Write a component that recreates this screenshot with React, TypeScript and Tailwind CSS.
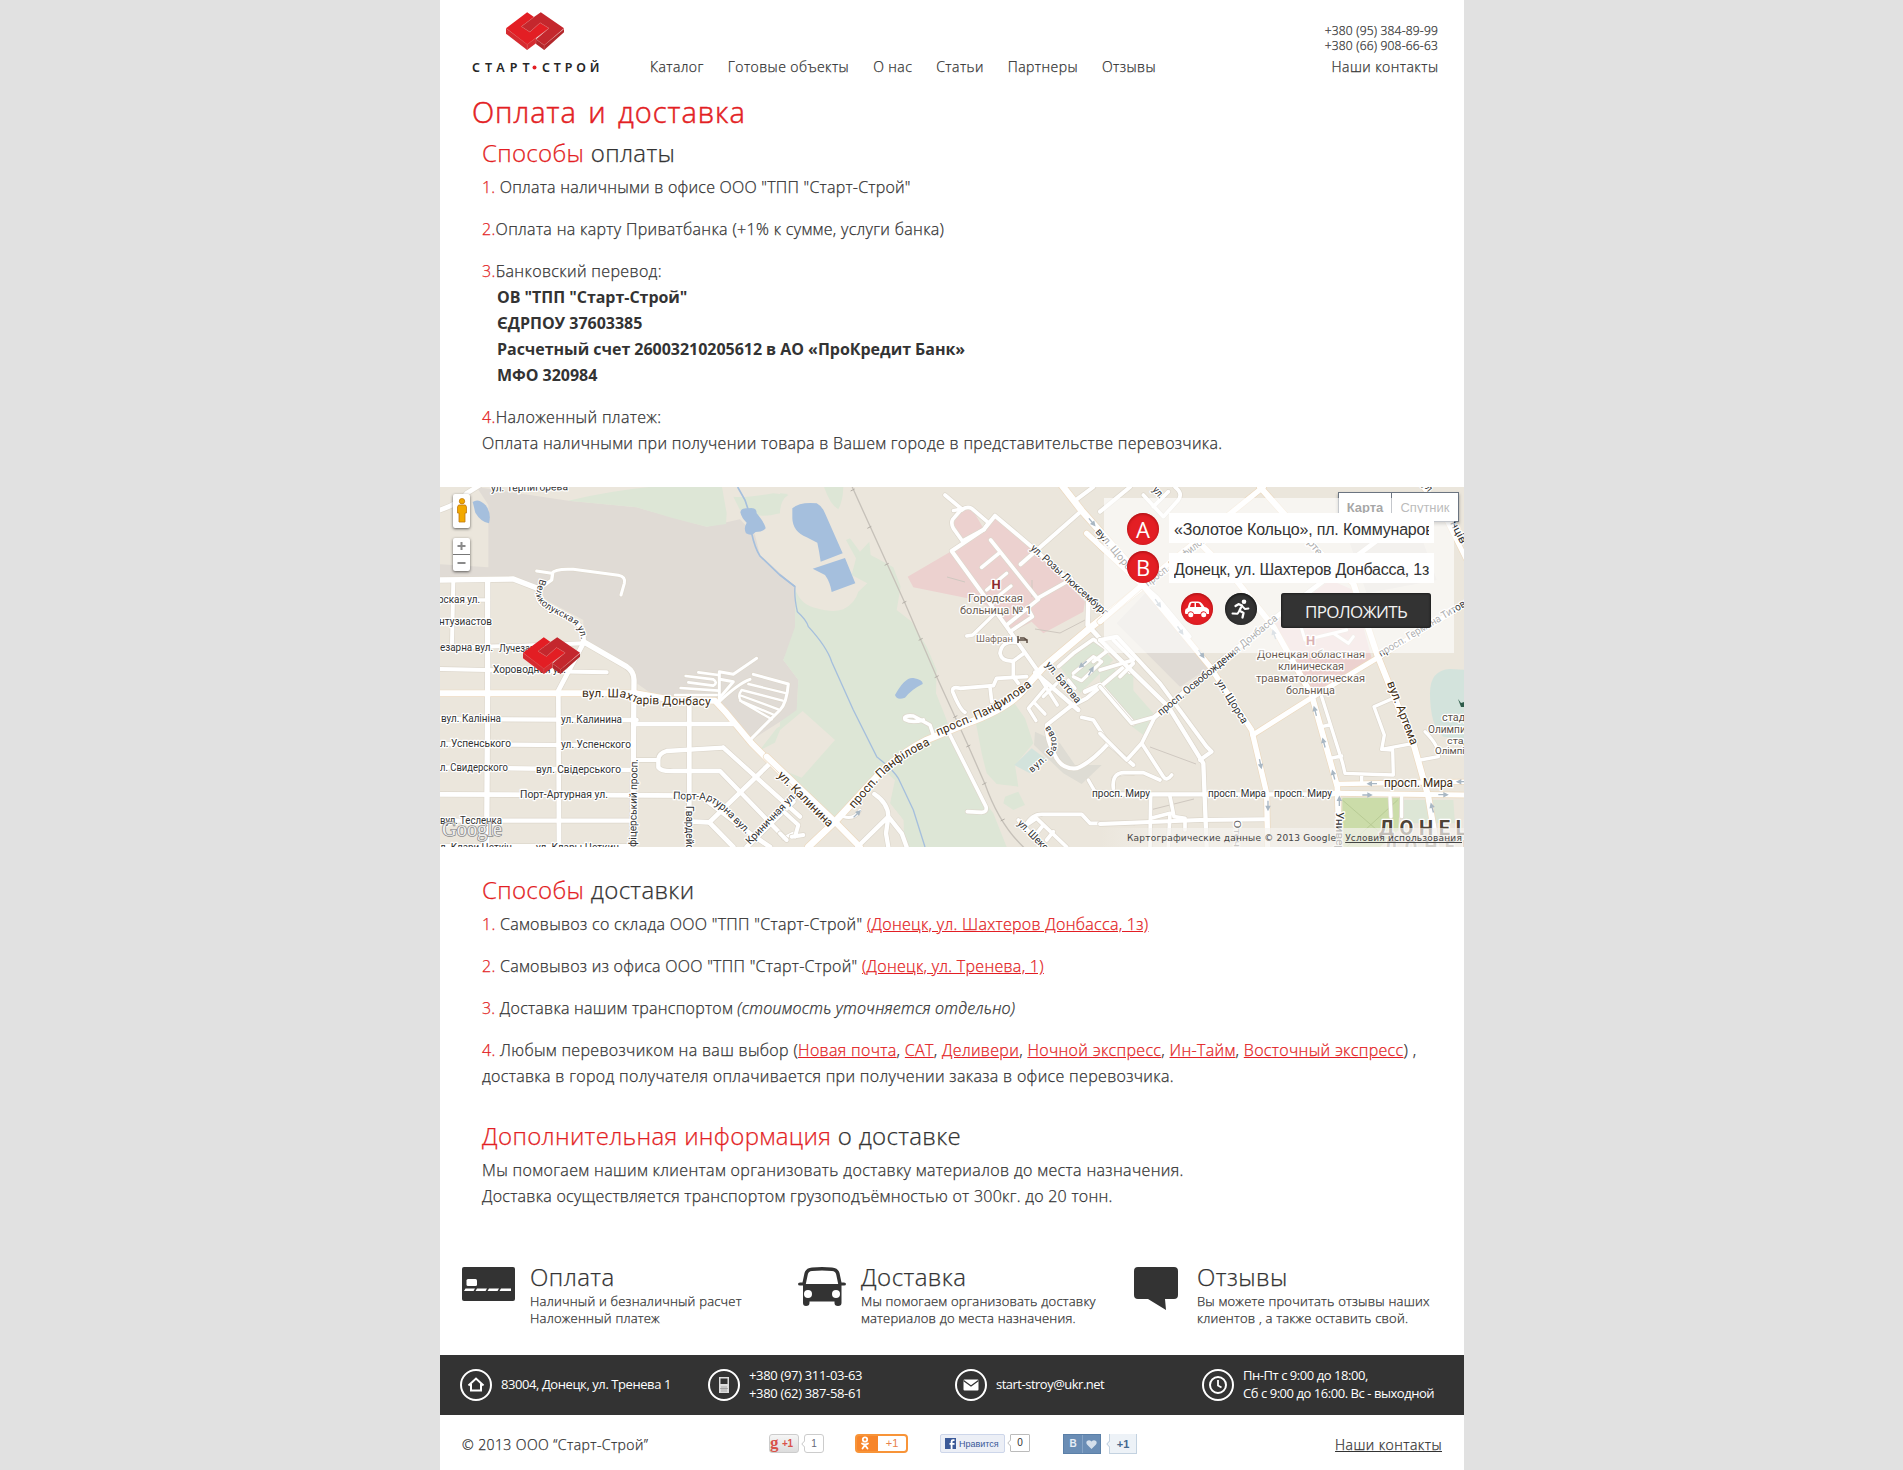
import React from "react";

const OS = "font-['Open_Sans',sans-serif]";
const THIN = "font-light [-webkit-text-stroke:0.25px]";

function LogoMark({ className }: { className: string }) {
  return (
    <svg viewBox="0 0 170 112" className={className} preserveAspectRatio="none">
      <path d="M0 48 L62 94 L62 112 L0 64Z" fill="#d62b30" />
      <path d="M62 94 L88 76 L88 92 L62 112Z" fill="#d62b30" />
      <path d="M88 80 L112 98 L170 50 L170 60 L112 112 L88 94Z" fill="#b3272b" />
      <path d="M0 48 L62 1 L82 15 L45 43 L70 59 L100 32 L126 48 L62 96Z" fill="#e31e24" />
      <path d="M82 15 L102 1 L170 48 L112 98 L88 80 L126 48 L100 32 L70 59 L45 43Z" fill="#c4272d" />
      <path d="M82 15 L45 43 L70 59 L100 32 L126 48 L62 96 L0 48" fill="none" stroke="#d9605f" strokeWidth="1.5" />
      <path d="M88 76 L88 94 M88 80 L112 98 L170 50 M112 98 V112 M62 96 V112" fill="none" stroke="#cf5a5a" strokeWidth="1.5" />
    </svg>
  );
}

/* ---------- map ---------- */

type Road = [string, number];

const roadsWest: Road[] = [
  ["M0 90 Q60 70 80 40 L120 15", 14],
  ["M0 300 L220 297 L300 328", 16],
  ["M300 325 Q285 350 305 372 Q345 400 395 418 Q435 440 430 485", 14],
  ["M430 485 L560 560 Q582 575 582 600 L578 1101", 16],
  ["M290 273 L335 280 Q345 265 400 268 L535 286 Q558 290 553 310 L543 345", 9],
  ["M338 280 L335 300 L300 325", 10],
  ["M143 300 L143 600 L140 1101", 16],
  ["M40 300 L36 490", 12],
  ["M0 360 L145 360", 11],
  ["M0 503 L250 497 L430 490", 12],
  ["M0 567 L250 572 L500 577", 12],
  ["M430 490 L355 632 L357 1101", 14],
  ["M0 717 L590 720", 13],
  ["M0 792 L580 797", 13],
  ["M0 862 L580 870", 13],
  ["M0 943 L780 947 L930 1060 L990 1101", 14],
  ["M0 1022 L580 1022", 13],
  ["M0 1098 L580 1098", 12],
  ["M580 732 L885 732", 13],
  ["M580 840 L650 840", 12],
  ["M850 803 L680 813 Q655 820 655 840 L655 862 Q665 875 700 873 L840 873 L1035 1075", 13],
  ["M850 803 L1080 1010", 13],
  ["M748 660 L748 1101", 14],
  ["M990 850 L808 1027 L760 1025", 14],
  ["M808 1027 L880 1101", 14],
  ["M1060 965 L920 1101", 14],
  ["M1030 1075 L1060 1060", 10],
  ["M705 645 L830 645 M722 624 L835 632 M737 588 L820 598 M745 607 L820 617 M775 577 L835 585 M820 598 Q835 608 820 617", 8],
  ["M950 535 L880 583 L838 575 L838 660 M840 598 L880 605 L838 655", 9],
  ["M930 598 Q895 610 832 670 M940 583 L1045 612 Q1040 670 1020 690 L935 775", 9],
  ["M925 612 L1040 640 M905 630 L1028 662 M898 645 L1015 688 M900 662 L1003 705 M905 630 Q890 650 905 665 L995 718", 7],
];

const mainWest: Road[] = [["M0 640 L590 640 L700 660 L825 662 L860 700 L935 790 L1060 915", 18]];

const roadsCenter: Road[] = [
  ["M940 21 L885 62", 12],
  ["M905 92 L722 253", 12],
  ["M495 45 L545 87 L518 118 Q512 130 520 145 L547 183 L612 148 L625 128 L575 85 Q560 78 545 90", 11],
  ["M520 92 L545 87", 10],
  ["M612 148 L515 213 L680 440 L775 575", 12],
  ["M612 148 L645 107 L755 200 L985 405", 12],
  ["M632 180 L772 355 M660 217 L605 262 M772 355 L875 297 M680 435 L775 358 M690 455 L757 410 L742 382", 11],
  ["M680 280 L620 330 M693 318 L640 360 M560 468 L578 465 L645 400", 10],
  ["M925 365 L923 435 L1050 575", 14],
  ["M710 487 Q665 480 660 520 Q665 545 700 543 L732 520 M700 543 L700 590 L715 610", 11],
  ["M555 697 Q540 690 518 635 Q515 618 540 625 L640 617 L650 595 L740 590 M630 620 L635 665", 11],
  ["M375 718 Q370 705 400 708 L450 735 L460 765 M375 718 Q395 730 430 720", 11],
  ["M510 765 L618 980 Q622 997 605 997 L562 995", 11],
  ["M283 942 Q325 970 325 1010 L318 1060 L325 1101 M325 1010 L365 1060 L380 1101 M325 1010 L232 1101", 13],
  ["M190 1010 Q225 1020 240 990", 9],
  ["M0 985 L55 1035 L45 1070 M0 1060 L20 1080 M35 1070 L70 1065", 12],
  ["M778 590 L832 675 M800 620 L745 685 L768 722 M765 670 L795 702 M790 650 L830 610", 10],
  ["M835 560 L880 520 L940 478 L985 510 L940 545", 11],
  ["M880 580 L940 530 L965 545 L905 602 L880 590 M865 600 L885 625", 10],
  ["M765 578 L895 690", 13],
  ["M915 635 L960 615 L1060 730", 14],
  ["M1050 545 L920 655 L870 680 L800 735 Q800 780 820 815 Q840 870 890 865 Q930 850 985 790 L1060 855", 12],
  ["M985 790 L940 720 L905 712", 11],
  ["M925 900 L945 935 L1050 943 M1000 930 L1000 895 Q1010 878 1060 880", 10],
  ["M735 1040 Q755 1000 790 1003 L905 1003 L930 1030 L1060 1030", 11],
  ["M715 1020 L790 1101 M740 1035 L770 1015 L860 1101 M770 1060 L790 1035 M800 1080 L820 1055", 11],
];

const mainCenter: Road[] = [
  ["M-40 830 L170 1030 L240 1101", 18],
  ["M845 15 L905 92 L1080 290", 20],
  ["M85 1101 L165 1025 L290 890 Q360 820 440 780 L560 730 Q700 680 745 612 L790 562 L935 440 L1080 325", 20],
];

const roadsEast: Road[] = [
  ["M130 45 L190 110 L235 60 Q250 40 225 21 M160 80 L205 35", 11],
  ["M0 95 L90 21", 12],
  ["M0 480 L50 470 L180 610 L320 800 L335 815 L300 840", 12],
  ["M0 480 L205 680 L310 850 L320 1101", 13],
  ["M0 620 L95 730 L165 710 L205 680 M0 570 L100 540 L40 480 M60 590 L100 550", 11],
  ["M165 710 L125 790 L80 840 L0 760 M125 790 L190 890 Q200 905 215 885", 11],
  ["M40 925 Q35 880 70 878 L130 878 L180 900", 11],
  ["M0 943 L500 943 L700 943", 13],
  ["M0 1032 L300 1020 L500 1018", 12],
  ["M152 945 L150 1101 M210 950 L222 1010 L255 1015 L255 1050 M152 1015 L210 1000 L205 1101 M410 1020 L412 1101", 11],
  ["M270 470 L170 350 L0 200", 10],
  ["M165 710 L360 545 L530 410 L700 280 L860 160", 14],
  ["M665 650 L728 850 L735 880 L880 885 L878 810 L845 808 L853 765 L822 680 L880 655 M725 828 L690 835 M688 735 L665 740 M845 808 L940 790 M785 885 L785 905", 10],
  ["M600 430 L615 480 L740 450 M700 460 L745 490 L760 470", 9],
  ["M960 840 L1015 830 Q1020 800 975 755", 10],
  ["M870 950 L873 1010 M905 950 L905 1010", 10],
];

const mainEast: Road[] = [
  ["M0 425 L130 312 L330 150 L490 21", 16],
  ["M-40 160 L130 318 L330 560 L455 750 L500 940 L503 1101", 16],
  ["M458 765 L640 650 L830 535 L1100 370", 15],
  ["M300 190 L400 290 L520 440 L635 645 L712 920 L718 1101", 17],
  ["M480 21 L640 200 L760 310 L830 520 L870 620 L940 790 L985 950 L1010 1101", 18],
  ["M715 912 L1100 905", 14],
  ["M700 940 L1100 945", 15],
  ["M970 21 L1040 120 L1100 240", 14],
];

function Roads({ roads, main, x }: { roads: Road[]; main: Road[]; x: number }) {
  return (
    <g transform={`translate(${x} -7) scale(.33333)`} fill="none" strokeLinecap="round" strokeLinejoin="round">
      {roads.map(([d, w], i) => (
        <path key={i} d={d} stroke="#ddd7cc" strokeWidth={w + 4} />
      ))}
      {main.map(([d, w], i) => (
        <path key={i} d={d} stroke="#ecd9bf" strokeWidth={w + 4} />
      ))}
      {roads.map(([d, w], i) => (
        <path key={i} d={d} stroke="#fff" strokeWidth={w} />
      ))}
      {main.map(([d, w], i) => (
        <path key={i} d={d} stroke="#fff" strokeWidth={w} />
      ))}
    </g>
  );
}

/* text, x, y, size, rotation, length, fill */
type Label = [string, number, number, number, number, number, string?];

const labels: Label[] = [
  ["ул. Терпигорева", 51, 4.5, 10.5, -1, 77],
  ["рская ул.", -2, 116, 10.5, 0, 42],
  ["нтузиастов", -1, 137.5, 10.5, 0, 53],
  ["езарна вул.", 0, 163.5, 10.5, 0, 53],
  ["Лучезарная", 59, 164.5, 10.5, 0, 52],
  ["Хороводная ул.", 53, 186, 10.5, 0, 73],
  ["вул. Калініна", 1, 235, 10.5, 0, 60],
  ["ул. Калинина", 121, 235.5, 10.5, 0, 61],
  ["л. Успенського", 0, 260, 10.5, 0, 71],
  ["ул. Успенского", 121, 261, 10.5, 0, 70],
  ["л. Свидерского", 0, 284, 10.5, 0, 68],
  ["вул. Свідерського", 96, 285.5, 10.5, 0, 85],
  ["Порт-Артурная ул.", 80, 311, 10.5, 0, 88],
  ["вул. Тесленка", 0, 337, 10.5, 0, 62],
  ["л. Клари Цеткін", 0, 364, 10.5, 0, 72],
  ["ул. Клары Цеткин", 96, 364, 10.5, 0, 83],
  ["фіцерський просп.", 196, 360, 10.5, -89, 88],
  ["Гвардейская", 246, 319, 10.5, 90, 60],
  ["Криничная ул.", 310, 358, 10.5, -46, 68],
  ["ул. Калинина", 337, 289, 12, 45, 73, "#3d2c12"],
  ["ул. Розы Люксембург", 590, 62, 10.5, 42, 100],
  ["вул. Щорса", 655, 45, 10.5, 50, 56],
  ["ул. Батова", 605, 178, 10.5, 51, 50],
  ["Шафран", 536, 155, 9.5, 0, 37, "#7b6d62"],
  ["Городская", 528, 114.5, 10.5, 0, 55, "#6b5d52"],
  ["больница № 1", 520, 126.5, 10.5, 0, 72, "#6b5d52"],
  ["просп. Миру", 652, 309.5, 10.5, 0, 58],
  ["ул. Шекспира", 577, 337, 10.5, 45, 60],
  ["просп. Миру", 834, 309.5, 10.5, 0, 58],
  ["просп. Мира", 768, 309.5, 10.5, 0, 58],
  ["просп. Мира", 944, 299.5, 12, 0, 69, "#3d2c12"],
  ["просп. Освобождения Донбасса", 721, 229, 10.5, -39.5, 152],
  ["просп. Панфилова", 708, 100, 10.5, -38, 80],
  ["ул. Щорса", 776, 195, 10.5, 58, 50],
  ["просп. Германа Титова", 941, 170, 10.5, -31, 105],
  ["вул. Артема", 947, 196, 12, 69, 67, "#3d2c12"],
  ["Артема", 862, 50, 10.5, 50, 40],
  ["ул.", 712, 3, 10.5, 50, 12],
  ["ул.", 982, -2, 10.5, 50, 12],
  ["нців", 1010, 36, 10.5, 63, 24],
  ["Универ", 896, 325, 10.5, 90, 40],
  ["Отечес", 794, 333, 9.5, 90, 40, "#6b6b6b"],
  ["Донецкая областная", 817, 170.5, 10.5, 0, 108, "#6b5d52"],
  ["клиническая", 838, 182.5, 10.5, 0, 66, "#6b5d52"],
  ["травматологическая", 816, 194.5, 10.5, 0, 109, "#6b5d52"],
  ["больница", 846, 206.5, 10.5, 0, 49, "#6b5d52"],
  ["стадион", 1002, 234, 10.5, 0, 42, "#5b5148"],
  ["Олимпийский", 988, 246, 10.5, 0, 66, "#5b5148"],
  ["стадіон", 1007, 256.5, 9.5, 0, 38, "#5b5148"],
  ["Олімпійський", 995, 266.5, 9.5, 0, 62, "#5b5148"],
];

/* text, path id, size, length, fill */
const curved: [string, string, number, number, string][] = [
  ["Великолукская ул.", "st-velyko", 9.5, 83, "#333"],
  ["вул. Шахтарів Донбасу", "st-shakht", 12, 130, "#3d2c12"],
  ["Порт-Артурна вул.", "st-port", 10.5, 86, "#333"],
  ["просп. Панфілова", "st-panf1", 12, 101, "#3d2c12"],
  ["просп. Панфилова", "st-panf2", 12, 107, "#3d2c12"],
  ["вул. Батова", "st-bat", 9.5, 60, "#333"],
];

const railTicks = [
  [218, 30], [268, 142], [320, 253], [373, 367], [422, 478], [470, 590], [526, 710], [565, 798], [613, 911], [668, 1020],
];

const arrows: [number, number, number][] = [
  [935, 125, 50], [1133, 368, 55], [1200, 450, 55], [1263, 520, 55], [1483, 465, -108],
  [1606, 695, -105], [1632, 790, -105], [1661, 886, -105], [1441, 850, 78], [1464, 975, 90],
  [1778, 911, 180], [1760, 945, 0], [1988, 944, 0], [2046, 905, 180], [1678, 965, -90], [1957, 985, -105],
  [910, 552, 140], [932, 575, -60], [230, 1003, -45],
];

function CityMap() {
  return (
    <svg viewBox="0 0 1024 360" className="block h-[360px] w-[1024px]">
      <defs>
        <path id="st-velyko" d="M100 92 L96 106 Q96 115 107 122 L131 135 Q142 142 141.500 160" />
        <path id="st-shakht" d="M142 210 L182 210.500 Q190 212.500 197 217 L275 218.500" />
        <path id="st-port" d="M233 312 L266 313 Q280 320 290 331 L310 351" />
        <path id="st-panf1" d="M414 322 L441 291 Q460 272 490 258" />
        <path id="st-panf2" d="M498 249 L538 232 Q562 222 593 198" />
        <path id="st-bat" d="M592 286 L610 270 Q625 258 607 236" />
        <linearGradient id="credit-fade" x1="0" x2="1">
          <stop offset="0" stopColor="#f5f3ef" stopOpacity="0" />
          <stop offset=".2" stopColor="#f5f3ef" stopOpacity=".7" />
          <stop offset="1" stopColor="#f5f3ef" stopOpacity=".7" />
        </linearGradient>
      </defs>
      <rect width="1024" height="360" fill="#ebe6dc" />
      <g transform="translate(0 -7) scale(.33333)">
        <path d="M110 21 L385 62 L590 82 L800 140 L900 118 L945 165 L960 225 L1065 320 L1075 440 L1030 540 L1075 600 L1070 700 L1020 725 L935 780 L880 730 L830 665 L640 645 L590 610 L575 575 L430 485 L430 420 L300 350 L290 325 L225 295 L0 300 L0 253 L145 262 L145 75Z" fill="#e0dbd5" />
        <path d="M385 62 Q540 25 700 15 L845 15 L860 100 L858 132 L800 140 L700 115 L590 82Z M880 50 Q910 55 1000 40 L1045 45 Q1020 60 1020 100 Q960 115 940 100 L900 90Z" fill="#dde6d6" />
        <path d="M958 812 L1010 745 L1060 715 L1060 760Z M1030 540 L1060 500 L1060 570Z" fill="#dde6d6" />
        <path d="M98 66 Q115 53 137 76 Q155 100 147 130 Q122 125 106 98Z" fill="#a5bfdd" />
        <path d="M893 21 L915 60 L925 90 M935 160 Q945 205 960 228 L1020 285 L1065 320" fill="none" stroke="#a5bfdd" strokeWidth="5" />
        <path d="M901 97 Q903 82 925 85 Q950 80 950 100 Q975 130 977 145 Q970 155 947 156 Q935 170 918 160 Q910 145 920 128 Q905 115 901 97Z" fill="#a5bfdd" />
      </g>
      <g transform="translate(340 -7) scale(.33333)">
        <path d="M45 325 Q60 375 110 385 Q160 400 190 388 Q225 370 235 335 L262 310 L215 285 L228 235 L198 180 L210 175 L240 215 L268 185 L272 225 L300 240 L340 262 L362 320 L350 390 L395 425 L440 500 L470 570 L468 640 L500 720 L520 790 L580 920 L640 1000 L680 1101 L372 1101 L370 1020 L330 970 L345 900 L310 870 L165 1020 L-30 840 L0 760 L0 725 L50 690 L55 600 L10 540 L45 440Z" fill="#dde6d6" />
        <path d="M68 693 L165 780 L65 893 L-40 850 L0 750Z" fill="#ebe6dc" />
        <path d="M340 900 L290 880 L165 1020 L230 1101 L372 1101 L370 1020 L330 970Z" fill="#ebe6dc" />
        <path d="M585 715 L700 665 L735 715 L760 790 L705 855 L715 920 L650 912 L620 880 L605 820Z M675 950 L715 935 L735 975 L700 990 L670 970Z M840 560 L940 480 L1000 540 L900 640Z M955 620 L1060 560 L1060 740Z M130 15 L190 15 Q190 60 175 88 Q150 75 130 15Z M0 40 L25 42 L0 55Z" fill="#dde6d6" />
        <path d="M765 755 L840 790 L885 855 L965 855 L905 912 L850 880 L762 795Z" fill="#dedcd4" />
        <path d="M703 855 L755 805 L802 840 L750 880Z" fill="#d3e3dc" />
        <path d="M383 290 L515 213 L547 183 L520 130 L545 88 L575 85 L612 148 L645 107 L755 200 L915 365 L910 395 L790 460 L755 425 L690 460 L650 400 L600 362 L400 322Z" fill="#ecd1cf" />
        <path d="M37 85 Q60 65 110 70 Q128 80 135 100 L188 220 L122 245 Q118 215 112 188 L80 172 Q38 155 37 115Z M98 266 L195 234 L226 310 L155 336 Q150 305 135 285Z M345 645 Q375 590 400 594 Q430 600 428 612 Q395 628 375 653 Q350 662 345 645Z" fill="#a5bfdd" />
        <path d="M0 285 L45 320 Q42 350 52 395 Q80 420 85 440 Q140 500 155 545 L220 690 L290 830 Q340 870 355 895 L400 990 L435 1101" fill="none" stroke="#a5bfdd" strokeWidth="4" />
        <path d="M214 15 L375 370 L470 590 L565 798 L615 912 Q660 1040 740 1110" fill="none" stroke="#c6c1b9" strokeWidth="4" />
        {railTicks.map(([x, y]) => (
          <path key={x} d={`M${x - 6} ${y + 3} l12 -6`} stroke="#b3aea6" strokeWidth="3" />
        ))}
      </g>
      <g transform="translate(660 -7) scale(.33333)">
        <path d="M0 520 L20 540 L160 700 L130 765 L90 735 L0 630Z" fill="#dde6d6" />
        <path d="M145 330 L330 560 L240 620 L50 430Z" fill="#e0dbd5" />
        <path d="M750 190 L960 160 L1010 300 L800 340Z" fill="#e0dbd5" />
        <path d="M520 430 L690 300 L760 330 L815 535 L640 650 L600 610Z" fill="#ecd1cf" />
        <path d="M990 640 Q990 570 1050 567 L1100 570 L1100 780 L1030 770 Q990 740 990 640Z" fill="#d3e3dc" />
        <path d="M727 953 L900 953 L895 1050 L840 1101 L727 1101Z" fill="#cbdca9" />
        <path d="M727 960 L890 1101 M893 960 L740 1101" stroke="#b8cb95" strokeWidth="3" />
        <path d="M910 960 L1060 960 L1065 1030 L910 1030Z" fill="#dde6d6" />
      </g>
      <path d="M507 90 l18 5 M592 110 v-17 M595 142 l25 4 l27 -14 M710 260 l46 17 M710 323 l44 -11" fill="none" stroke="#cfc8c0" strokeWidth="1" />
      <Roads roads={roadsWest} main={mainWest} x={0} />
      <Roads roads={roadsCenter} main={mainCenter} x={340} />
      <Roads roads={roadsEast} main={mainEast} x={660} />
      <g transform="translate(340 -7) scale(.33333)" stroke="#a9b7c3" strokeWidth="4" fill="#a9b7c3">
        {arrows.map(([x, y, r], i) => (
          <path key={i} d="M-13 0 H8 M4 -5 L14 0 L4 5Z" transform={`translate(${x} ${y}) rotate(${r})`} />
        ))}
      </g>
      <g className="font-[Roboto,sans-serif]" stroke="#fff" strokeWidth="2.500" strokeLinejoin="round" paintOrder="stroke" fill="#333">
        {labels.map(([t, x, y, s, r, len, fill], i) => (
          <text key={i} fontSize={s} textLength={len} lengthAdjust="spacingAndGlyphs" fill={fill ?? "#333"} transform={`translate(${x} ${y}) rotate(${r})`}>
            {t}
          </text>
        ))}
        {curved.map(([t, id, s, len, fill]) => (
          <text key={id} fontSize={s} fill={fill} textLength={len}>
            <textPath href={`#${id}`} textLength={len}>{t}</textPath>
          </text>
        ))}
        <text x="551.500" y="102" fontSize="13" fontWeight="700" fill="#8c2a2e">H</text>
        <text x="866" y="158" fontSize="13" fontWeight="700" fill="#a03a3e">H</text>
        <text x="939" y="348" fontSize="20" fontWeight="700" fill="#4d4337" textLength="92" >ДОНЕЦ</text>
        <text x="944" y="366" fontSize="18" fontWeight="700" fill="#8a8278" textLength="92">ДОНЕЦ</text>
      </g>
      <path d="M578 149 v7 M578 153 h9 v3 M580 151 h4 l3 2" stroke="#5b4c42" strokeWidth="1.500" fill="none" />
      <path d="M1018 212 l3 4 l3 -1 v5 h-3 z" fill="#2f5b4a" />
      <rect x="660" y="341" width="364" height="19" fill="url(#credit-fade)" />
      <text x="2" y="348.500" fontSize="20" textLength="60" lengthAdjust="spacingAndGlyphs" fill="#fff" fillOpacity=".85" stroke="#8c8c8c" strokeWidth="1.500" paintOrder="stroke" className="font-['Liberation_Serif',serif]">Google</text>
    </svg>
  );
}

function Pin({ children }: { children: React.ReactNode }) {
  return (
    <div className={`flex size-8 items-center justify-center rounded-full bg-[#e31e24] text-[22px] leading-none text-white shadow-[inset_0_1px_3px_rgba(120,0,0,.6)] ${OS}`}>
      {children}
    </div>
  );
}

function RoutePanel() {
  return (
    <div className="absolute left-[664px] top-[11px] h-[155px] w-[350px] bg-white/60 pl-[23px] pt-[15px]">
      <div className="flex gap-[10px]">
        <div className="flex flex-col gap-[6px]">
          <Pin>A</Pin>
          <Pin>B</Pin>
        </div>
        <div className="flex flex-col gap-[10px] font-['Liberation_Sans',Arial,sans-serif] text-[16px] text-[#333]">
          <div className="h-[30px] w-[265px] bg-white px-[5px] leading-[33px]">
            <div className="w-[255px] overflow-hidden whitespace-nowrap tracking-[-0.17px]">«Золотое Кольцо», пл. Коммунаров</div>
          </div>
          <div className="h-[30px] w-[265px] bg-white px-[5px] leading-[33px]">
            <div className="w-[255px] overflow-hidden whitespace-nowrap tracking-[-0.25px]">Донецк, ул. Шахтеров Донбасса, 1з</div>
          </div>
        </div>
      </div>
      <div className="mt-[10px] flex pl-[54px]">
        <div className="flex size-8 items-center justify-center rounded-full bg-[#e31e24] shadow-[inset_0_1px_3px_rgba(120,0,0,.6)]">
          <svg viewBox="0 0 24 17" className="h-[17px] w-6" fill="#fff">
            <path fillRule="evenodd" d="M0 10 Q0 7.500 2.500 7 L4 2.500 Q4.500 0.500 7 0.500 H13 Q15.500 .5 17 2.500 L19.500 6 Q24 7 24 9.500 V13 H21.800 A3.200 3.200 0 0 0 15.500 13 H9 A3.200 3.200 0 0 0 2.700 13 H1 Q0 13 0 12Z M6 2.500 L5 6 H9.500 V2 H7Z M11 2 V6 H16.500 L14.500 2.800 Q14 2 13 2Z" />
            <circle cx="5.800" cy="13.800" r="2.500" />
            <circle cx="18.700" cy="13.800" r="2.500" />
          </svg>
        </div>
        <div className="ml-3 flex size-8 items-center justify-center rounded-full bg-[#333] shadow-[inset_0_1px_3px_rgba(0,0,0,.8)]">
          <svg viewBox="0 0 20 20" className="size-5" fill="none" stroke="#fff" strokeLinecap="round" strokeLinejoin="round">
            <circle cx="13" cy="2.700" r="2.300" fill="#fff" stroke="none" />
            <path d="M4.500 7 L7.500 5.200 L11 6.500 L8.500 11.500 L12.500 14 L11.500 18.500" strokeWidth="2.300" />
            <path d="M11 7 L14 10 L17.500 9.500" strokeWidth="1.800" />
            <path d="M8 12.500 L6.500 14.800 L1.500 14.500" strokeWidth="2" />
          </svg>
        </div>
        <div className={`ml-6 h-[35px] w-[150px] rounded-[3px] bg-[#333] text-center text-[17px] leading-[37px] tracking-[-0.7px] text-[#f2f2f2] shadow-[inset_0_0_3px_rgba(0,0,0,.8)] ${OS}`}>
          ПРОЛОЖИТЬ
        </div>
      </div>
    </div>
  );
}

function MapSection() {
  return (
    <div className="relative mt-[31px] h-[360px] overflow-hidden">
      <CityMap />
      <LogoMark className="absolute left-[83px] top-[150px] h-[37px] w-[57px]" />
      <div className="absolute left-[13px] top-[7px] flex h-[34px] w-[17px] justify-center rounded-[2px] bg-white pt-[4px] shadow-[0_1px_3px_rgba(0,0,0,.6)]">
        <svg viewBox="0 0 10 25" className="h-[25px] w-[10px]" fill="#f2a900" stroke="#c07a10" strokeWidth=".8">
          <circle cx="5" cy="3.200" r="2.700" />
          <path d="M1.500 7 H8.500 L9.500 9 V15 H8 V24 H2 V15 H.5 V9Z" />
        </svg>
      </div>
      <div className="absolute left-[13px] top-[51px] h-[33px] w-[17px] rounded-[2px] bg-white shadow-[0_1px_3px_rgba(0,0,0,.6)]">
        <svg viewBox="0 0 17 33" className="h-[33px] w-[17px]" stroke="#8a8a8a" strokeWidth="2">
          <path d="M4.500 8 H12.500 M8.500 4 V12 M4.500 25 H12.500" />
          <path d="M0 16.500 H17" stroke="#777" strokeWidth="1" />
        </svg>
      </div>
      <div className="absolute left-[898px] top-[5px] flex h-[30px] w-[121px] border border-[#6b7480] bg-white font-['Liberation_Sans',Arial,sans-serif] text-[13px] leading-[30px] shadow-[0_2px_3px_rgba(0,0,0,.35)]">
        <div className="w-[53px] border-r border-[#6b7480] text-center font-bold text-[#222]">Карта</div>
        <div className="grow text-center text-[#555]">Спутник</div>
      </div>
      <RoutePanel />
      <div className="absolute bottom-[2px] right-[2px] flex gap-[9px] whitespace-nowrap font-['DejaVu_Sans',sans-serif] text-[9px] leading-[14px] text-[#444]">
        <span className="tracking-[0.2px]">Картографические данные © 2013 Google</span>
        <span className="tracking-[0.2px] underline">Условия использования</span>
      </div>
    </div>
  );
}

/* ---------- text ---------- */

function Num({ children }: { children: React.ReactNode }) {
  return <span className="text-[#e31e24]">{children}</span>;
}

function Link({ children }: { children: React.ReactNode }) {
  return <a className="text-[#e31e24] underline">{children}</a>;
}

function Heading({ red, dark, className = "" }: { red: string; dark: string; className?: string }) {
  return (
    <h2 className={`pl-[42px] text-[24px] leading-[32px] tracking-[0.32px] ${THIN} ${className}`}>
      <span className="text-[#e31e24]">{red}</span> {dark}
    </h2>
  );
}

function Feature({ icon, title, lines, width, gap }: { icon: React.ReactNode; title: string; lines: string[]; width: string; gap: string }) {
  return (
    <div className={`flex ${width}`}>
      <div className={gap}>{icon}</div>
      <div className={`-mt-[6px] whitespace-nowrap ${THIN}`}>
        <div className="text-[24px] leading-[32px] tracking-[0.45px]">{title}</div>
        <div className="text-[13px] leading-[17px] tracking-[0.2px]">
          {lines.map((l) => (
            <div key={l}>{l}</div>
          ))}
        </div>
      </div>
    </div>
  );
}

function Contact({ icon, lines, width, tracking }: { icon: React.ReactNode; lines: string[]; width: string; tracking: string }) {
  return (
    <div className={`flex items-center ${width}`}>
      <svg viewBox="0 0 32 32" className="size-8 shrink-0" fill="none" stroke="#fff">
        <circle cx="16" cy="16" r="15" strokeWidth="2" />
        {icon}
      </svg>
      <div className={`-mt-[2px] ml-[9px] whitespace-nowrap text-[13px] leading-[18px] text-white ${tracking}`}>
        {lines.map((l) => (
          <div key={l}>{l}</div>
        ))}
      </div>
    </div>
  );
}

function Notch({ color, fill }: { color: string; fill: string }) {
  return (
    <svg viewBox="0 0 4 8" className="-mr-px h-2 w-1 self-center relative" fill={fill} stroke={color} strokeWidth="1">
      <path d="M4 .5 L.8 4 L4 7.500" />
    </svg>
  );
}

function Social() {
  return (
    <div className="flex h-5 items-start font-['Liberation_Sans',Arial,sans-serif] text-[9px]">
      <div className="flex h-[19px]">
        <div className="flex h-[19px] w-[30px] items-center rounded-[3px] border border-[#ccc] bg-gradient-to-b from-[#f6f6f6] to-[#dcdcdc] pr-[3px] font-bold text-[#d9534a]">
          <span className="-mt-[3px] w-[12px] font-['Liberation_Serif',serif] text-[17px] leading-none">g</span>
          <span className="grow text-[10px] tracking-[-0.3px]">+1</span>
        </div>
        <div className="ml-[2px] flex">
          <Notch color="#c8c8c8" fill="#fff" />
          <div className="flex h-[19px] w-5 items-center justify-center rounded-[3px] border border-[#ccc] text-[10px] text-[#667]">1</div>
        </div>
      </div>
      <div className="ml-[31px] flex h-[19px] w-[53px] rounded-[4px] border-2 border-[#f89438] bg-[#f7852a]">
        <svg viewBox="0 0 20 15" className="h-[15px] w-[21px]" fill="none" stroke="#fff" strokeWidth="1.800" strokeLinecap="round">
          <circle cx="7.500" cy="3.500" r="2.200" />
          <path d="M4.500 7.500 Q7.500 9.500 10.500 7.500 M7.500 9 L5 12.500 M7.500 9 L10 12.500" />
        </svg>
        <div className="grow rounded-r-[2px] bg-white text-center text-[11px] leading-[15px] text-[#e8804a]">+1</div>
      </div>
      <div className="ml-[32px] flex h-[19px] w-[65px] items-center rounded-[2px] border border-[#cdd6ea] bg-[#eceff6] pl-[4px]">
        <svg viewBox="0 0 11 11" className="size-[11px] shrink-0">
          <rect width="11" height="11" fill="#3b5998" />
          <path d="M7.500 11 V6.800 H9.500 V5 H7.500 V3.800 Q7.500 3 8.500 3 H9.500 V1.300 H8 Q5.700 1.300 5.700 3.600 V5 H4.500 V6.800 H5.700 V11Z" fill="#fff" />
        </svg>
        <span className="ml-[3px] text-[9px] text-[#3b5998]">Нравится</span>
      </div>
      <div className="ml-[2px] flex h-[18px]">
        <Notch color="#bbb" fill="#fff" />
        <div className="flex h-[18px] w-5 items-center justify-center rounded-[1px] border border-[#bbb] text-[10px] text-[#333]">0</div>
      </div>
      <div className="ml-[33px] flex h-5 w-[38px] items-center border border-[#5b80a8] bg-[#6a8db5] font-bold text-[#e6edf5]">
        <span className="w-[18px] text-center text-[10px]">B</span>
        <span className="h-full w-px bg-[#86a4c6]" />
        <svg viewBox="0 0 12 10" className="ml-[3px] h-[9px] w-[11px]" fill="#d5e0ec">
          <path d="M6 10 L1 5 Q-.5 3 1 1.200 Q3.500 -1 6 1.800 Q8.500 -1 11 1.200 Q12.500 3 11 5Z" />
        </svg>
      </div>
      <div className="ml-[5px] flex h-5">
        <Notch color="#b9cbdc" fill="#edf2f7" />
        <div className="flex h-5 w-[28px] items-center justify-center border border-t-0 border-[#c3d2e0] bg-[#edf2f7] text-[11px] font-bold text-[#45688e]">+1</div>
      </div>
    </div>
  );
}

const nav = ["Каталог", "Готовые объекты", "О нас", "Статьи", "Партнеры", "Отзывы"];

const BODY = `pl-[42px] text-[16px] leading-[26px] tracking-[0.3px] whitespace-nowrap ${THIN}`;

export default function App() {
  return (
    <div className="min-h-[1470px] bg-[#e1e1e1] pl-[440px]">
      <div className={`h-[1470px] w-[1024px] overflow-hidden bg-white text-[#333] ${OS}`}>
        <header className="flex h-[91px] pl-[30px] pr-[26px]">
          <div className="w-[180px] pt-[12px]">
            <LogoMark className="ml-[36px] h-[38px] w-[58px]" />
            <svg viewBox="0 0 134 16" className="mt-[9px] block h-4 w-[134px] font-['Noto_Sans',sans-serif]" fontSize="12.500" fontWeight="600" fill="#262626">
              <text x="2" y="13" textLength="57.500">СТАРТ</text>
              <circle cx="64.500" cy="8.500" r="2" fill="#e31e24" />
              <text x="72" y="13" textLength="57.500">СТРОЙ</text>
            </svg>
          </div>
          <nav className={`mt-[57px] flex gap-6 text-[14px] leading-[20px] tracking-[0.43px] whitespace-nowrap ${THIN}`}>
            {nav.map((n) => (
              <a key={n}>{n}</a>
            ))}
          </nav>
          <div className={`ml-auto pt-[23px] text-right ${THIN}`}>
            <div className="text-[12px] leading-[15px] tracking-[0.2px]">
              <div>+380 (95) 384-89-99</div>
              <div>+380 (66) 908-66-63</div>
            </div>
            <div className="-mr-[0.5px] mt-[4px] text-[14px] leading-[20px] tracking-[0.45px]">Наши контакты</div>
          </div>
        </header>

        <h1 className="-mb-[2px] pl-[32px] text-[29px] font-light leading-[42px] tracking-[0.95px] text-[#e31e24] [-webkit-text-stroke:0.5px] [word-spacing:3px]">Оплата и доставка</h1>
        <Heading red="Способы" dark="оплаты" className="mt-[6px]" />
        <div className={`mt-[5px] flex flex-col gap-4 ${BODY}`}>
          <p className="tracking-[0.23px]"><Num>1.</Num> Оплата наличными в офисе ООО "ТПП "Старт-Строй"</p>
          <p className="tracking-[0.32px]"><Num>2.</Num>Оплата на карту Приватбанка (+1% к сумме, услуги банка)</p>
          <div>
            <p className="tracking-[0.35px]"><Num>3.</Num>Банковский перевод:</p>
            <div className="pl-[15px] font-bold tracking-[-0.03px] [-webkit-text-stroke:0px]">
              <p>ОВ "ТПП "Старт-Строй"</p>
              <p>ЄДРПОУ 37603385</p>
              <p>Расчетный счет 26003210205612 в АО «ПроКредит Банк»</p>
              <p>МФО 320984</p>
            </div>
          </div>
          <div>
            <p className="tracking-[0.35px]"><Num>4.</Num>Наложенный платеж:</p>
            <p>Оплата наличными при получении товара в Вашем городе в представительстве перевозчика.</p>
          </div>
        </div>

        <MapSection />

        <Heading red="Способы" dark="доставки" className="mt-[27px]" />
        <div className={`mt-[5px] flex flex-col gap-4 ${BODY}`}>
          <p><Num>1.</Num> Самовывоз со склада ООО "ТПП "Старт-Строй" <Link>(Донецк, ул. Шахтеров Донбасса, 1з)</Link></p>
          <p className="tracking-[0.28px]"><Num>2.</Num> Самовывоз из офиса ООО "ТПП "Старт-Строй" <Link>(Донецк, ул. Тренева, 1)</Link></p>
          <p className="tracking-[0.24px]"><Num>3.</Num> Доставка нашим транспортом <i>(стоимость уточняется отдельно)</i></p>
          <div className="tracking-[0.325px]">
            <p>
              <Num>4.</Num> Любым перевозчиком на ваш выбор (<Link>Новая почта</Link>, <Link>САТ</Link>, <Link>Деливери</Link>, <Link>Ночной экспресс</Link>, <Link>Ин-Тайм</Link>, <Link>Восточный экспресс</Link>) ,
            </p>
            <p>доставка в город получателя оплачивается при получении заказа в офисе перевозчика.</p>
          </div>
        </div>

        <Heading red="Дополнительная информация" dark="о доставке" className="mt-[31px]" />
        <div className={`mt-[5px] ${BODY}`}>
          <p className="tracking-[0.36px]">Мы помогаем нашим клиентам организовать доставку материалов до места назначения.</p>
          <p className="tracking-[0.26px]">Доставка осуществляется транспортом грузоподъёмностью от 300кг. до 20 тонн.</p>
        </div>

        <div className="mt-[58px] flex h-[88px] pl-[22px]">
          <Feature
            width="w-[336px]"
            gap="w-[68px]"
            title="Оплата"
            lines={["Наличный и безналичный расчет", "Наложенный платеж"]}
            icon={
              <svg viewBox="0 0 53 34" className="h-[34px] w-[53px]">
                <rect width="53" height="34" rx="2" fill="#333" />
                <rect x="4.500" y="12" width="10.500" height="7" rx="1.500" fill="#fff" />
                <path d="M3.500 21.500 h9.500 l-1.500 2.500 h-9.500z M15 21.500 h10 l-1.500 2.500 h-10z M27 21.500 h10 l-1.500 2.500 h-10z M39 21.500 h10 v2.500 h-11.500z" fill="#fff" />
              </svg>
            }
          />
          <Feature
            width="w-[336px]"
            gap="w-[63px]"
            title="Доставка"
            lines={["Мы помогаем организовать доставку", "материалов до места назначения."]}
            icon={
              <svg viewBox="0 0 48 39" className="h-[39px] w-12" fill="#333">
                <path fillRule="evenodd" d="M14 .5 Q24 -.5 34 .5 Q40 1 41.500 6 L43.500 15.500 H46 Q48 15.500 48 17 Q48 18.500 46 18.500 H43.500 V36 Q43.500 39 40 39 Q36.500 39 36.500 36 V34.500 H11.500 V36 Q11.500 39 8 39 Q5 39 5 36 V18.500 H2 Q0 18.500 0 17 Q0 15.500 2 15.500 H4.500 L6.500 6 Q8 1 14 .5Z M14 4 Q10.500 4.200 9.800 7.500 L7.800 17 H40.200 L38.200 7.500 Q37.500 4.200 34 4 Q24 3 14 4Z" />
                <circle cx="10" cy="27" r="4" fill="#fff" />
                <circle cx="38" cy="27" r="4" fill="#fff" />
              </svg>
            }
          />
          <Feature
            width="w-[330px]"
            gap="w-[63px]"
            title="Отзывы"
            lines={["Вы можете прочитать отзывы наших", "клиентов , а также оставить свой."]}
            icon={
              <svg viewBox="0 0 44 43" className="h-[43px] w-11" fill="#333">
                <path d="M4 0 H40 Q44 0 44 4 V28 Q44 32 40 32 H31 L32 43 L14 32 H4 Q0 32 0 28 V4 Q0 0 4 0Z" />
              </svg>
            }
          />
        </div>

        <div className="flex h-[60px] bg-[#333] pl-5">
          <Contact
            width="w-[248px]"
            tracking="tracking-[-0.43px]"
            lines={["83004, Донецк, ул. Тренева 1"]}
            icon={<path d="M8.500 16.500 L16 9.500 L23.500 16.500 M11 15 V21.500 H21 V15" strokeWidth="2" />}
          />
          <Contact
            width="w-[247px]"
            tracking="tracking-[-0.33px]"
            lines={["+380 (97) 311-03-63", "+380 (62) 387-58-61"]}
            icon={
              <g stroke="none" fill="#ddd">
                <path fillRule="evenodd" d="M11 8 H21 V24 H11Z M12.500 9.500 V15 H19.500 V9.500Z" />
                <path d="M14 17 V23 M16 17 V23 M18 17 V23 M12 19.500 H20" stroke="#888" strokeWidth=".6" />
              </g>
            }
          />
          <Contact
            width="w-[247px]"
            tracking="tracking-[-0.5px]"
            lines={["start-stroy@ukr.net"]}
            icon={
              <g>
                <rect x="8.500" y="10.500" width="15" height="11" rx="1" fill="#fff" stroke="none" />
                <path d="M8.500 11.500 L16 17 L23.500 11.500" stroke="#333" strokeWidth="1.300" />
              </g>
            }
          />
          <Contact
            width="w-[250px]"
            tracking="tracking-[-0.45px]"
            lines={["Пн-Пт с 9:00 до 18:00,", "Сб с 9:00 до 16:00. Вс - выходной"]}
            icon={
              <g>
                <circle cx="16" cy="16" r="8" strokeWidth="2" />
                <path d="M16 11 V16.500 L19.500 18.500" strokeWidth="1.800" />
              </g>
            }
          />
        </div>

        <footer className="flex h-[55px] items-start px-[22px] pt-[19px] text-[14px] leading-[20px]">
          <div className={`mt-[1px] w-[307px] whitespace-nowrap tracking-[0.42px] ${THIN}`}>© 2013 ООО “Старт-Строй”</div>
          <Social />
          <a className={`ml-auto mt-[1px] tracking-[0.45px] underline ${THIN}`}>Наши контакты</a>
        </footer>
      </div>
    </div>
  );
}
